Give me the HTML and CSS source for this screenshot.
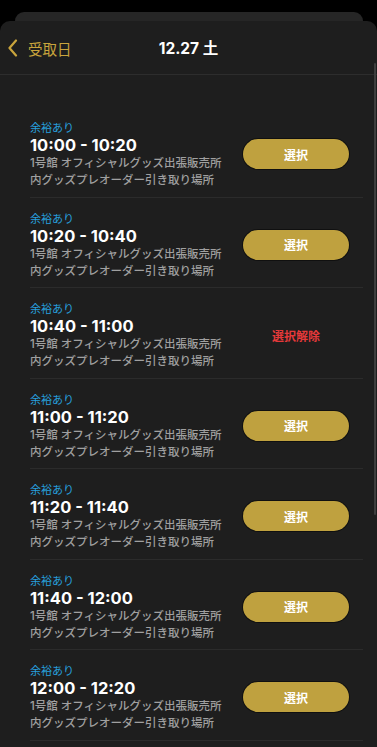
FILE: index.html
```html
<!DOCTYPE html>
<html lang="ja">
<head>
<meta charset="utf-8">
<title>受取日</title>
<link rel="stylesheet" href="styles.css">
</head>
<body>
<div class="back-card"></div>
<div class="sheet">
  <header class="header">
    <div class="back">
      <svg class="chev" width="11" height="18" viewBox="0 0 11 18"><path d="M9 1.5 L2.5 9 L9 16.5" fill="none" stroke="#c9a43c" stroke-width="2.2" stroke-linecap="round" stroke-linejoin="round"/></svg>
      <span>受取日</span>
    </div>
    <div class="title">12.27 土</div>
    <div></div>
  </header>
  <div class="list">
    <div class="row">
      <div class="info">
        <div class="status">余裕あり</div>
        <div class="time">10:00 - 10:20</div>
        <div class="place">1号館 オフィシャルグッズ出張販売所<br>内グッズプレオーダー引き取り場所</div>
      </div>
      <div class="action"><button class="btn">選択</button></div>
    </div>
    <div class="row">
      <div class="info">
        <div class="status">余裕あり</div>
        <div class="time">10:20 - 10:40</div>
        <div class="place">1号館 オフィシャルグッズ出張販売所<br>内グッズプレオーダー引き取り場所</div>
      </div>
      <div class="action"><button class="btn">選択</button></div>
    </div>
    <div class="row">
      <div class="info">
        <div class="status">余裕あり</div>
        <div class="time">10:40 - 11:00</div>
        <div class="place">1号館 オフィシャルグッズ出張販売所<br>内グッズプレオーダー引き取り場所</div>
      </div>
      <div class="action"><span class="cancel">選択解除</span></div>
    </div>
    <div class="row">
      <div class="info">
        <div class="status">余裕あり</div>
        <div class="time">11:00 - 11:20</div>
        <div class="place">1号館 オフィシャルグッズ出張販売所<br>内グッズプレオーダー引き取り場所</div>
      </div>
      <div class="action"><button class="btn">選択</button></div>
    </div>
    <div class="row">
      <div class="info">
        <div class="status">余裕あり</div>
        <div class="time">11:20 - 11:40</div>
        <div class="place">1号館 オフィシャルグッズ出張販売所<br>内グッズプレオーダー引き取り場所</div>
      </div>
      <div class="action"><button class="btn">選択</button></div>
    </div>
    <div class="row">
      <div class="info">
        <div class="status">余裕あり</div>
        <div class="time">11:40 - 12:00</div>
        <div class="place">1号館 オフィシャルグッズ出張販売所<br>内グッズプレオーダー引き取り場所</div>
      </div>
      <div class="action"><button class="btn">選択</button></div>
    </div>
    <div class="row">
      <div class="info">
        <div class="status">余裕あり</div>
        <div class="time">12:00 - 12:20</div>
        <div class="place">1号館 オフィシャルグッズ出張販売所<br>内グッズプレオーダー引き取り場所</div>
      </div>
      <div class="action"><button class="btn">選択</button></div>
    </div>
  </div>
  <div class="scroll-indicator"></div>
</div>
</body>
</html>
```

FILE: styles.css
```css
html, body {
  margin: 0;
  padding: 0;
  background: #000;
  height: 100%;
  overflow: hidden;
}
body {
  font-family: "Inter", "Noto Sans CJK JP", sans-serif;
  color: #fff;
}
.back-card {
  margin: 12px 14px 0 15px;
  height: 9px;
  background: #262626;
  border-radius: 10px 10px 0 0;
}
.sheet {
  position: relative;
  background: #1e1e1e;
  border-radius: 10px 10px 0 0;
  height: 730px;
}
.header {
  display: grid;
  grid-template-columns: 1fr auto 1fr;
  align-items: center;
  height: 53px;
  border-bottom: 1px solid #2d2d2d;
}
.back {
  display: flex;
  align-items: center;
  gap: 10px;
  padding-left: 7px;
  color: #c9a43c;
  font-family: "Noto Sans CJK JP", sans-serif;
  font-size: 14.5px;
  padding-top: 1px;
}
.chev { display: block; }
.title {
  font-size: 15.5px;
  font-weight: 700;
  color: #fff;
  padding-bottom: 1px;
}
.list {
  padding: 32px 14px 0 30px;
}
.row {
  display: flex;
  align-items: center;
  padding: 12px 0 7.5px;
  border-bottom: 1px solid #2b2b2b;
}
.info {
  flex: 1;
}
.status {
  font-family: "Noto Sans CJK JP", sans-serif;
  font-size: 11px;
  line-height: 16px;
  color: #27a0de;
}
.time {
  font-size: 16.5px;
  font-weight: 700;
  line-height: 20px;
  color: #fff;
}
.place {
  font-family: "Inter", "Noto Sans CJK JP", sans-serif;
  font-size: 11.5px;
  font-weight: 500;
  line-height: 17px;
  color: #a0a0a0;
}
.action {
  width: 106px;
  margin-right: 14px;
  display: flex;
  justify-content: center;
}
.btn {
  width: 106px;
  height: 30px;
  border: none;
  border-radius: 15px;
  background: #bfa13f;
  box-shadow: 0 0 0 1px rgba(0, 0, 0, 0.45);
  color: #fff;
  font-family: "Noto Sans CJK JP", sans-serif;
  font-size: 12px;
  font-weight: 700;
  padding: 0;
}
.cancel {
  font-family: "Noto Sans CJK JP", sans-serif;
  font-size: 12px;
  font-weight: 700;
  color: #e5393a;
}
.scroll-indicator {
  position: absolute;
  right: 1px;
  top: 42px;
  width: 2.5px;
  height: 452px;
  border-radius: 2px;
  background: #3e3e3e;
}
```
